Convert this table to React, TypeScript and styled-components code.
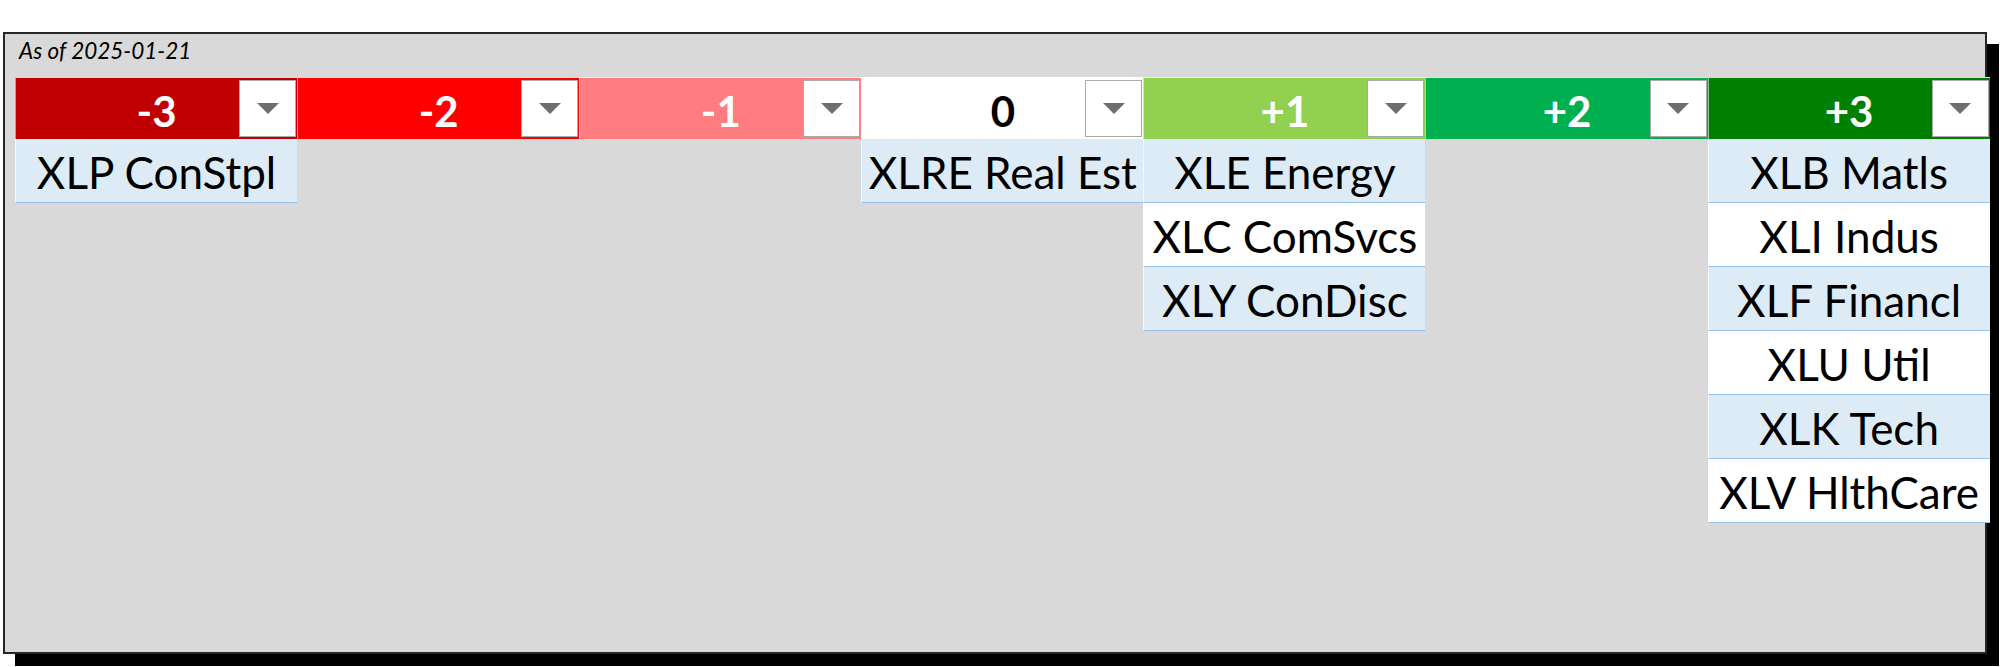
import styled, { createGlobalStyle } from "styled-components";

const GlobalStyle = createGlobalStyle`
  html, body {
    margin: 0;
    padding: 0;
    background: #ffffff;
  }
  body {
    font-family: Lato, "Open Sans", sans-serif;
    width: 2000px;
    height: 667px;
    overflow: hidden;
  }
`;

type Bucket = {
  label: string;
  bg: string;
  fg: string;
  items: string[];
};

const buckets: Bucket[] = [
  { label: "-3", bg: "#C00000", fg: "#ffffff", items: ["XLP ConStpl"] },
  { label: "-2", bg: "#FF0000", fg: "#ffffff", items: [] },
  { label: "-1", bg: "#FF7C80", fg: "#ffffff", items: [] },
  { label: "0", bg: "#ffffff", fg: "#000000", items: ["XLRE Real Est"] },
  {
    label: "+1",
    bg: "#92D050",
    fg: "#ffffff",
    items: ["XLE Energy", "XLC ComSvcs", "XLY ConDisc"],
  },
  { label: "+2", bg: "#00B050", fg: "#ffffff", items: [] },
  {
    label: "+3",
    bg: "#008000",
    fg: "#ffffff",
    items: [
      "XLB Matls",
      "XLI Indus",
      "XLF Financl",
      "XLU Util",
      "XLK Tech",
      "XLV HlthCare",
    ],
  },
];

const Panel = styled.div`
  margin: 32px 0 0 3px;
  width: 1984px;
  height: 622px;
  box-sizing: border-box;
  background: #d9d9d9;
  border: 2px solid #262626;
  box-shadow: 12px 12px 0 #000000;
  padding: 4px 0 0 10px;
  display: flex;
  flex-direction: column;
`;

const AsOf = styled.div`
  font-style: italic;
  font-size: 22.5px;
  line-height: 26px;
  color: #000;
  padding-left: 4px;
  height: 39px;
`;

const Board = styled.div`
  display: grid;
  grid-template-columns: repeat(7, 282.1px);
  align-items: start;
`;

const Column = styled.div`
  display: flex;
  flex-direction: column;
`;

const Header = styled.div<{ $bg: string; $fg: string }>`
  display: grid;
  height: 62px;
  background: ${(p) => p.$bg};
  color: ${(p) => p.$fg};
  border-top: 1px solid rgba(255, 255, 255, 0.8);
  border-left: 1px solid rgba(255, 255, 255, 0.55);
  box-sizing: border-box;
`;

const HeaderLabel = styled.span`
  grid-area: 1 / 1;
  align-self: center;
  justify-self: center;
  font-weight: 700;
  font-size: 42px;
  line-height: 1;
  padding-top: 4px;
`;

const Filter = styled.span`
  grid-area: 1 / 1;
  align-self: center;
  justify-self: end;
  margin-right: 1px;
  width: 57px;
  height: 57px;
  box-sizing: border-box;
  background: #ffffff;
  border: 1px solid #a9a9a9;
  display: flex;
  align-items: center;
  justify-content: center;
`;

const Cell = styled.div<{ $shade: boolean }>`
  height: 64px;
  box-sizing: border-box;
  background: ${(p) => (p.$shade ? "#DDEBF7" : "#ffffff")};
  border-bottom: 1.5px solid #9bc2e6;
  border-left: 1px solid rgba(255, 255, 255, 0.7);
  display: flex;
  align-items: center;
  justify-content: center;
  font-size: 44px;
  color: #000;
  white-space: nowrap;
  padding-top: 3px;
`;

function FilterArrow() {
  return (
    <svg width="22" height="12" viewBox="0 0 22 12">
      <path d="M0 0 H22 L11 11 Z" fill="#6e6e6e" />
    </svg>
  );
}

export default function App() {
  return (
    <>
      <GlobalStyle />
      <Panel>
        <AsOf>As of 2025-01-21</AsOf>
        <Board>
          {buckets.map((b) => (
            <Column key={b.label}>
              <Header $bg={b.bg} $fg={b.fg}>
                <HeaderLabel>{b.label}</HeaderLabel>
                <Filter>
                  <FilterArrow />
                </Filter>
              </Header>
              {b.items.map((item, i) => (
                <Cell key={item} $shade={i % 2 === 0}>
                  {item}
                </Cell>
              ))}
            </Column>
          ))}
        </Board>
      </Panel>
    </>
  );
}
